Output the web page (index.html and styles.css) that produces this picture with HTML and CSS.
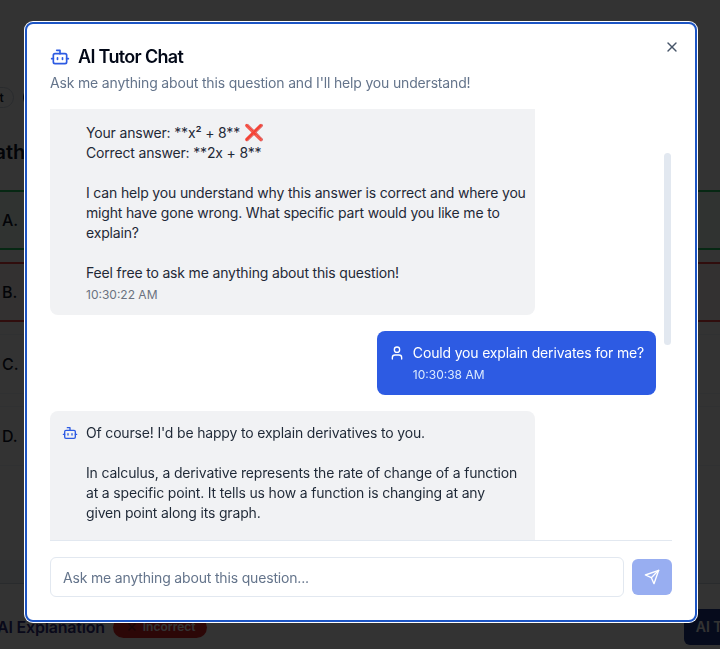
FILE: index.html
```html
<!DOCTYPE html>
<html lang="en">
<head>
<meta charset="utf-8">
<title>AI Tutor Chat</title>
<link rel="stylesheet" href="styles.css">
</head>
<body>
<div class="page">
  <div class="pills"><span class="pill">Short</span><span class="pill pill-dark">Math</span></div>
  <h2 class="heading">Math Question</h2>
  <div class="options">
    <div class="option correct">A.</div>
    <div class="option wrong">B.</div>
    <div class="option">C.</div>
    <div class="option">D.</div>
  </div>
  <div class="band"></div>
  <div class="result">
    <span class="result-title">AI Explanation</span>
    <span class="badge">
      <svg class="badge-icon" viewBox="0 0 24 24"><path d="M18 6 6 18"/><path d="m6 6 12 12"/></svg>
      Incorrect
    </span>
    <span class="tutor-btn">AI Tutor</span>
  </div>
</div>
<div class="overlay"></div>
<section class="modal">
  <button class="close" aria-label="Close">
    <svg class="icon" viewBox="0 0 24 24"><path d="M18 6 6 18"/><path d="m6 6 12 12"/></svg>
  </button>
  <header class="modal-head">
    <h1 class="title">
      <svg class="icon icon-lg icon-blue" viewBox="0 0 24 24"><path d="M12 8V4H8"/><rect x="4" y="8" width="16" height="12" rx="2"/><path d="M2 14h2"/><path d="M20 14h2"/><path d="M15 13v2"/><path d="M9 13v2"/></svg>
      AI Tutor Chat
    </h1>
    <p class="subtitle">Ask me anything about this question and I'll help you understand!</p>
  </header>
  <div class="chat">
    <div class="messages">
      <article class="msg bot msg-roomy">
        <svg class="icon icon-blue msg-icon" viewBox="0 0 24 24"><path d="M12 8V4H8"/><rect x="4" y="8" width="16" height="12" rx="2"/><path d="M2 14h2"/><path d="M20 14h2"/><path d="M15 13v2"/><path d="M9 13v2"/></svg>
        <div class="msg-body">
          <p class="msg-text">Let's go over this question together.

Your answer: **x² + 8** <span class="emoji">❌</span>
Correct answer: **2x + 8**

I can help you understand why this answer is correct and where you might have gone wrong. What specific part would you like me to explain?

Feel free to ask me anything about this question!</p>
          <time class="msg-time">10:30:22 AM</time>
        </div>
      </article>
      <article class="msg user">
        <svg class="icon msg-icon" viewBox="0 0 24 24"><path d="M19 21v-2a4 4 0 0 0-4-4H9a4 4 0 0 0-4 4v2"/><circle cx="12" cy="7" r="4"/></svg>
        <div class="msg-body">
          <p class="msg-text">Could you explain derivates for me?</p>
          <time class="msg-time">10:30:38 AM</time>
        </div>
      </article>
      <article class="msg bot">
        <svg class="icon icon-blue msg-icon" viewBox="0 0 24 24"><path d="M12 8V4H8"/><rect x="4" y="8" width="16" height="12" rx="2"/><path d="M2 14h2"/><path d="M20 14h2"/><path d="M15 13v2"/><path d="M9 13v2"/></svg>
        <div class="msg-body">
          <p class="msg-text">Of course! I'd be happy to explain derivatives to you.

In calculus, a derivative represents the rate of change of a function at a specific point. It tells us how a function is changing at any given point along its graph.

Think of it as the slope of the curve at one point.</p>
        </div>
      </article>
    </div>
    <div class="scroll-thumb"></div>
  </div>
  <form class="composer">
    <input class="field" type="text" placeholder="Ask me anything about this question...">
    <button class="send" type="button" aria-label="Send">
      <svg class="icon" viewBox="0 0 24 24"><path d="m22 2-7 20-4-9-9-4Z"/><path d="M22 2 11 13"/></svg>
    </button>
  </form>
</section>
</body>
</html>
```
FILE: styles.css
```css
* { box-sizing: border-box; }
html, body { margin: 0; height: 649px; overflow: hidden; background: #fff; }
body { font-family: Inter, "Liberation Sans", sans-serif; color: #0f172a; font-size: 14px; line-height: 20px; }

.page { height: 649px; overflow: hidden; padding-top: 87px; }
.pills { display: flex; gap: 9px; margin-left: -38px; height: 21px; }
.pill { display: flex; align-items: center; padding: 0 9px; border: 1px solid #cbd5e1; border-radius: 11px; font-size: 12px; font-weight: 600; }
.pill-dark { background: #0f172a; border-color: #0f172a; color: #fff; }
.heading { margin: 30px 0 24px -24px; font-size: 20px; line-height: 28px; font-weight: 600; white-space: nowrap; }
.options { display: flex; flex-direction: column; gap: 12px; margin: 0 -16px; }
.option { display: flex; align-items: center; height: 60px; padding: 0 18px; border: 2px solid #f1f5f9; border-width: 1px 0; font-size: 16px; font-weight: 500; }
.correct { border: solid #22c55e; border-width: 2px 0; background: #f0fdf4; }
.wrong { border: solid #ef4444; border-width: 2px 0; background: #fef2f2; }
.band { height: 24px; margin-top: 94px; background: #f1f5f9; border-bottom: 1px solid #cbd5e1; }
.result { display: flex; align-items: center; height: 36px; margin-top: 25px; margin-left: -3px; gap: 8px; white-space: nowrap; }
.result-title { font-size: 16px; font-weight: 600; letter-spacing: -0.2px; color: #312e81; }
.badge { display: flex; align-items: center; gap: 4px; height: 21px; padding: 0 12px; border-radius: 11px; background: #dc2626; color: #fff; font-size: 12px; font-weight: 600; }
.badge-icon { width: 14px; height: 14px; fill: none; stroke: #7f1d1d; stroke-width: 3; }
.tutor-btn { flex: none; display: flex; align-items: center; height: 36px; margin-left: auto; margin-right: -41px; padding: 0 12px; border-radius: 6px; background: #1e3a8a; color: #fff; font-size: 14px; font-weight: 600; }

.overlay { position: fixed; inset: 0; background: rgba(0, 0, 0, 0.8); }
.modal { position: fixed; left: 25px; top: 22px; width: 672px; height: 600px; display: flex; flex-direction: column; padding: 23px; background: #fff; border: 2px solid #1d55c4; border-radius: 8px; box-shadow: 0 0 0 1px #fff; }
.close { position: absolute; top: 15px; right: 15px; display: flex; width: 16px; height: 16px; padding: 0; border: 0; background: none; color: #475569; }

.icon { flex: none; width: 16px; height: 16px; fill: none; stroke: currentColor; stroke-width: 2; stroke-linecap: round; stroke-linejoin: round; }
.icon-lg { width: 20px; height: 20px; }
.icon-blue { color: #2d5be3; }
.msg-icon { margin-top: 2px; }

.modal-head { display: flex; flex-direction: column; gap: 6px; }
.title { display: flex; align-items: center; gap: 8px; margin: 0; font-size: 18px; line-height: 20px; font-weight: 600; letter-spacing: -0.68px; color: #020817; }
.subtitle { margin: 0; letter-spacing: -0.17px; color: #64748b; }

.chat { position: relative; flex: 1; min-height: 0; margin-top: 16px; overflow: hidden; border-bottom: 1px solid #e2e8f0; }
.messages { display: flex; flex-direction: column; align-items: flex-start; gap: 16px; width: 606px; margin-top: -39px; }
.msg { display: flex; gap: 8px; max-width: 485px; padding: 12px; border-radius: 8px; background: #f1f2f4; color: #1f2937; }
.msg.bot { width: 485px; }
.msg.msg-roomy { padding-right: 4px; }
.msg.user { align-self: flex-end; background: #2d5be3; color: #fff; }
.msg-text { margin: 0; white-space: pre-line; letter-spacing: -0.17px; }
.msg-time { display: block; margin-top: 4px; font-size: 12px; line-height: 16px; color: #6b7280; }
.user .msg-time { color: #dbeafe; }
.emoji { font-size: 16px; line-height: 20px; letter-spacing: 0; }
.scroll-thumb { position: absolute; top: 44px; left: 614px; width: 7px; height: 192px; border-radius: 4px; background: #e2e8f0; }

.composer { display: flex; align-items: center; gap: 8px; margin-top: 16px; }
.field { flex: 1; height: 40px; padding: 0 12px; border: 1px solid #e2e8f0; border-radius: 6px; background: #fff; font: 14px Inter, "Liberation Sans", sans-serif; letter-spacing: -0.17px; color: #0f172a; }
.field::placeholder { color: #64748b; opacity: 1; }
.send { display: flex; align-items: center; justify-content: center; width: 40px; height: 36px; padding: 0; border: 0; border-radius: 6px; background: #98aef1; color: #fff; }
```
